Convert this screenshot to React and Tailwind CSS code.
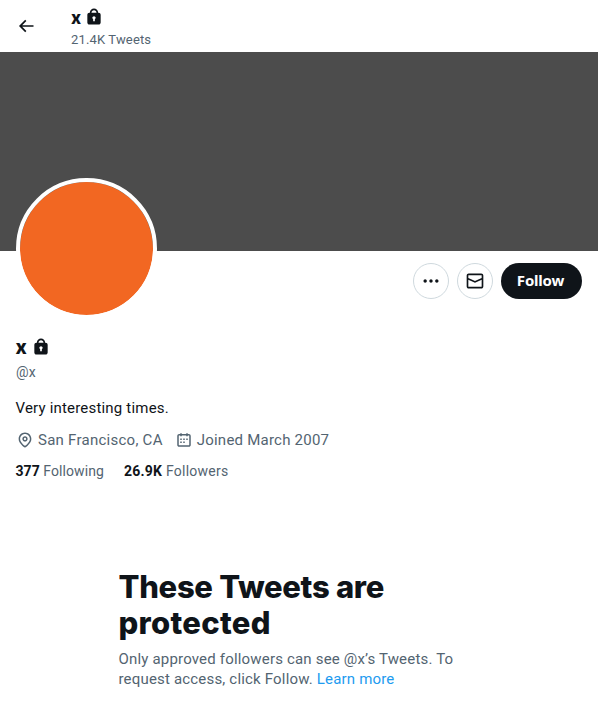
const ICONS = {
  back: 'M7.414 13l5.043 5.04-1.414 1.42L3.586 12l7.457-7.46 1.414 1.42L7.414 11H21v2H7.414z',
  lock: 'M17.5 7H17v-.25c0-2.76-2.24-5-5-5s-5 2.24-5 5V7h-.5C5.12 7 4 8.12 4 9.5v9C4 19.88 5.12 21 6.5 21h11c1.39 0 2.5-1.12 2.5-2.5v-9C20 8.12 18.89 7 17.5 7zM13 14.73V17h-2v-2.27c-.59-.34-1-.99-1-1.73 0-1.1.9-2 2-2 1.11 0 2 .9 2 2 0 .74-.4 1.39-1 1.73zM15 7H9v-.25c0-1.66 1.35-3 3-3 1.66 0 3 1.34 3 3V7z',
  more: 'M3 12c0-1.1.9-2 2-2s2 .9 2 2-.9 2-2 2-2-.9-2-2zm9 2c1.1 0 2-.9 2-2s-.9-2-2-2-2 .9-2 2 .9 2 2 2zm7 0c1.1 0 2-.9 2-2s-.9-2-2-2-2 .9-2 2 .9 2 2 2z',
  mail: 'M1.998 5.5c0-1.381 1.119-2.5 2.5-2.5h15c1.381 0 2.5 1.119 2.5 2.5v13c0 1.381-1.119 2.5-2.5 2.5h-15c-1.381 0-2.5-1.119-2.5-2.5v-13zm2.5-.5c-.276 0-.5.224-.5.5v2.764l8 3.638 8-3.636V5.5c0-.276-.224-.5-.5-.5h-15zm15.5 5.463l-8 3.636-8-3.638V18.5c0 .276.224.5.5.5h15c.276 0 .5-.224.5-.5v-8.037z',
  location: 'M12 7c-1.93 0-3.5 1.57-3.5 3.5S10.07 14 12 14s3.5-1.57 3.5-3.5S13.93 7 12 7zm0 5c-.827 0-1.5-.673-1.5-1.5S11.173 9 12 9s1.5.673 1.5 1.5S12.827 12 12 12zm0-10c-4.687 0-8.5 3.813-8.5 8.5 0 5.967 7.621 11.116 7.945 11.332l.555.37.555-.37c.324-.216 7.945-5.365 7.945-11.332C20.5 5.813 16.687 2 12 2zm0 17.77c-1.665-1.241-6.5-5.196-6.5-9.27C5.5 6.916 8.416 4 12 4s6.5 2.916 6.5 6.5c0 4.073-4.835 8.028-6.5 9.27z',
  calendar: 'M7 4V3h2v1h6V3h2v1h1.5C19.89 4 21 5.12 21 6.5v12c0 1.38-1.11 2.5-2.5 2.5h-13C4.12 21 3 19.88 3 18.5v-12C3 5.12 4.12 4 5.5 4H7zm0 2H5.5c-.27 0-.5.22-.5.5v12c0 .28.23.5.5.5h13c.28 0 .5-.22.5-.5v-12c0-.28-.22-.5-.5-.5H17v1h-2V6H9v1H7V6zm0 6h2v-2H7v2zm0 4h2v-2H7v2zm4-4h2v-2h-2v2zm0 4h2v-2h-2v2zm4-4h2v-2h-2v2z',
};

const Icon = ({ name, className }) => (
  <svg viewBox="0 0 24 24" fill="currentColor" aria-hidden="true" className={`shrink-0 ${className}`}>
    <path d={ICONS[name]} />
  </svg>
);

const Header = () => (
  <header className="flex h-[52px] items-center pl-4">
    <button aria-label="Back" className="-mt-px">
      <Icon name="back" className="size-5" />
    </button>
    <div className="ml-[35px] pt-px">
      <div className="flex h-6 items-center gap-[3px]">
        <h2 className="font-['Inter',sans-serif] text-[17px] font-extrabold leading-6">x</h2>
        <Icon name="lock" className="-mt-0.5 size-5" />
      </div>
      <p className="mt-0.5 text-[13px] leading-4 tracking-[0.15px] text-[#536471]">21.4K Tweets</p>
    </div>
  </header>
);

const Actions = () => (
  <div className="flex gap-2 pt-3">
    <button aria-label="More" className="flex size-9 items-center justify-center rounded-full border border-[#cfd9de]">
      <Icon name="more" className="size-5" />
    </button>
    <button aria-label="Message" className="flex size-9 items-center justify-center rounded-full border border-[#cfd9de]">
      <Icon name="mail" className="size-5" />
    </button>
    <button className="h-9 w-[81px] rounded-full bg-[#0f1419] pr-0.5 pb-px font-['Noto_Sans',sans-serif] text-[15px] font-bold tracking-[-0.2px] text-white">Follow</button>
  </div>
);

const Profile = () => (
  <section className="px-4">
    <div className="flex h-[85px] items-start justify-between">
      <div className="relative -mt-[73px] size-[141px] rounded-full border-4 border-white bg-[#f26722] bg-clip-padding" />
      <Actions />
    </div>
    <div className="flex h-6 items-center gap-1">
      <h1 className="font-['Inter',sans-serif] -ml-[0.5px] text-[19px] font-extrabold leading-6">x</h1>
      <Icon name="lock" className="-mt-0.5 size-5" />
    </div>
    <p className="mt-0.5 text-[14px] leading-5 tracking-[0.2px] text-[#536471]">@x</p>
    <p className="mt-4 -ml-[0.5px] text-[15px] leading-5 tracking-[0.19px]">Very interesting times.</p>
    <div className="mt-3 flex h-5 items-center gap-3 text-[15px] text-[#536471]">
      <span className="flex items-center gap-1">
        <Icon name="location" className="size-[18px]" />
        <span className="tracking-[0.26px]">San Francisco, CA</span>
      </span>
      <span className="flex items-center gap-1">
        <Icon name="calendar" className="size-[18px]" />
        <span className="tracking-[0.23px]">Joined March 2007</span>
      </span>
    </div>
    <div className="mt-[11px] -ml-[0.5px] flex gap-5 text-[14px] leading-5 text-[#536471]">
      <span className="tracking-[0.07px]"><b className="text-[#0f1419]">377</b> Following</span>
      <span className="tracking-[0.25px]"><b className="text-[#0f1419]">26.9K</b> Followers</span>
    </div>
  </section>
);

const ProtectedNotice = () => (
  <section className="mt-[88px] ml-[118.5px] w-[360px]">
    <h2 className="font-['Inter',sans-serif] text-[31px] font-extrabold leading-9 tracking-[-0.3px]">
      These Tweets are<br />
      <span className="tracking-[0.3px]">protected</span>
    </h2>
    <p className="mt-2 text-[15px] leading-5 tracking-[0.18px] text-[#536471]">
      Only approved followers can see @x’s Tweets. To<br />
      request access, click Follow. <a href="#" className="text-[#1d9bf0]">Learn more</a>
    </p>
  </section>
);

export default function App() {
  return (
    <main className="h-[713px] w-[598px] overflow-hidden bg-white font-['Roboto',sans-serif] text-[#0f1419]">
      <Header />
      <div className="h-[199px] bg-[#4c4c4c]" />
      <Profile />
      <ProtectedNotice />
    </main>
  );
}
